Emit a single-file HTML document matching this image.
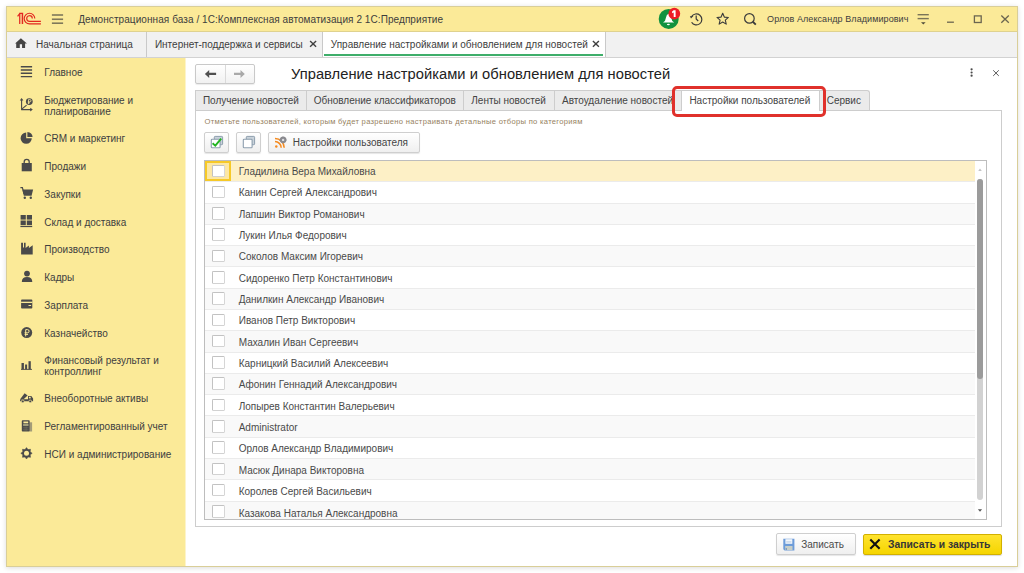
<!DOCTYPE html>
<html><head><meta charset="utf-8">
<style>
html,body{margin:0;padding:0;}
body{width:1024px;height:573px;overflow:hidden;background:#ffffff;position:relative;font-family:"Liberation Sans",sans-serif;font-size:10px;line-height:1;color:#404040;}
.a{position:absolute;box-sizing:border-box;}
.t{position:absolute;white-space:nowrap;}
svg{position:absolute;overflow:visible;}
</style></head>
<body>
<div class="a" style="left:6px;top:6px;width:1012px;height:561px;border:1px solid #d9ce98;background:#fff;box-shadow:0 1px 5px rgba(0,0,0,0.14);"></div>
<div class="a" style="left:7px;top:7px;width:1010px;height:25px;background:#fbea98;border-bottom:1px solid #dfd28f;"></div>
<div class="a" style="left:7px;top:32px;width:1010px;height:26px;background:#f1f1f1;border-bottom:1px solid #d2d2d2;"></div>
<div class="a" style="left:7px;top:58px;width:178px;height:508px;background:#fbea98;box-shadow:1px 0 0 #fdf4cb;"></div>
<div class="t" style="left:78.20px;top:14.68px;font-size:10px;line-height:10px;color:#3d3d3d;letter-spacing:0.075px;">Демонстрационная база / 1С:Комплексная автоматизация 2 1С:Предприятие</div>
<div class="t" style="left:767.10px;top:14.88px;font-size:9px;line-height:9px;color:#3d3d3d;letter-spacing:0.08px;">Орлов Александр Владимирович</div>
<div class="a" style="left:146px;top:32px;width:1px;height:25px;background:#c9c9c9;"></div>
<div class="a" style="left:322px;top:32px;width:284px;height:25px;background:#fff;border-left:1px solid #c9c9c9;border-right:1px solid #c9c9c9;"></div>
<div class="a" style="left:324.4px;top:54px;width:279px;height:2px;background:#3fae6a;"></div>
<div class="t" style="left:36.00px;top:40.33px;font-size:10px;line-height:10px;color:#3d3d3d;">Начальная страница</div>
<div class="t" style="left:154.90px;top:40.33px;font-size:10px;line-height:10px;color:#3d3d3d;">Интернет-поддержка и сервисы</div>
<div class="t" style="left:330.80px;top:40.33px;font-size:10px;line-height:10px;color:#3d3d3d;">Управление настройками и обновлением для новостей</div>
<div class="t" style="left:44.30px;top:68.03px;font-size:10px;line-height:10px;color:#404040;">Главное</div>
<div class="t" style="left:44.3px;top:94.93px;font-size:10px;line-height:11px;color:#404040;">Бюджетирование и<br>планирование</div>
<div class="t" style="left:44.30px;top:134.14px;font-size:10px;line-height:10px;color:#404040;">CRM и маркетинг</div>
<div class="t" style="left:44.30px;top:161.84px;font-size:10px;line-height:10px;color:#404040;">Продажи</div>
<div class="t" style="left:44.30px;top:189.74px;font-size:10px;line-height:10px;color:#404040;">Закупки</div>
<div class="t" style="left:44.30px;top:217.53px;font-size:10px;line-height:10px;color:#404040;">Склад и доставка</div>
<div class="t" style="left:44.30px;top:245.34px;font-size:10px;line-height:10px;color:#404040;">Производство</div>
<div class="t" style="left:44.30px;top:273.14px;font-size:10px;line-height:10px;color:#404040;">Кадры</div>
<div class="t" style="left:44.30px;top:300.94px;font-size:10px;line-height:10px;color:#404040;">Зарплата</div>
<div class="t" style="left:44.30px;top:328.64px;font-size:10px;line-height:10px;color:#404040;">Казначейство</div>
<div class="t" style="left:44.3px;top:355.24px;font-size:10px;line-height:11px;color:#404040;">Финансовый результат и<br>контроллинг</div>
<div class="t" style="left:44.30px;top:394.04px;font-size:10px;line-height:10px;color:#404040;">Внеоборотные активы</div>
<div class="t" style="left:44.30px;top:421.94px;font-size:10px;line-height:10px;color:#404040;">Регламентированный учет</div>
<div class="t" style="left:44.30px;top:449.94px;font-size:10px;line-height:10px;color:#404040;">НСИ и администрирование</div>
<div class="a" style="left:195px;top:64px;width:60px;height:20px;border:1px solid #c9c9c9;border-radius:2px;background:linear-gradient(#fff,#f1f1f1);box-shadow:0 1px 1px rgba(0,0,0,0.08);"></div>
<div class="a" style="left:225px;top:65px;width:1px;height:18px;background:#dadada;"></div>
<div class="t" style="left:291.00px;top:66.76px;font-size:14.7px;line-height:14.7px;color:#222;letter-spacing:0.035px;">Управление настройками и обновлением для новостей</div>
<div class="a" style="left:195.0px;top:90.4px;width:112.0px;height:20.5px;background:#ebebeb;border:1px solid #cdcdcd;border-bottom:none;overflow:hidden;"><div class="t" style="left:6.9px;top:4.83px;font-size:10px;line-height:10px;color:#444;">Получение новостей</div></div>
<div class="a" style="left:306.0px;top:90.4px;width:158.0px;height:20.5px;background:#ebebeb;border:1px solid #cdcdcd;border-bottom:none;overflow:hidden;"><div class="t" style="left:6.7px;top:4.83px;font-size:10px;line-height:10px;color:#444;">Обновление классификаторов</div></div>
<div class="a" style="left:463.0px;top:90.4px;width:92.3px;height:20.5px;background:#ebebeb;border:1px solid #cdcdcd;border-bottom:none;overflow:hidden;"><div class="t" style="left:7.3px;top:4.83px;font-size:10px;line-height:10px;color:#444;">Ленты новостей</div></div>
<div class="a" style="left:554.3px;top:90.4px;width:127.7px;height:20.5px;background:#ebebeb;border:1px solid #cdcdcd;border-bottom:none;overflow:hidden;"><div class="t" style="left:6.7px;top:4.83px;font-size:10px;line-height:10px;color:#444;">Автоудаление новостей</div></div>
<div class="a" style="left:818.6px;top:90.4px;width:51px;height:20.5px;background:#ebebeb;border:1px solid #cdcdcd;border-bottom:none;border-top-right-radius:3px;"></div>
<div class="t" style="left:826.70px;top:96.23px;font-size:10px;line-height:10px;color:#444;">Сервис</div>
<div class="a" style="left:195px;top:110.4px;width:807px;height:417px;border:1px solid #cdcdcd;background:#fff;"></div>
<div class="a" style="left:681px;top:90.4px;width:138.6px;height:21px;background:#fff;border:1px solid #cdcdcd;border-bottom:none;"></div>
<div class="t" style="left:689.40px;top:96.23px;font-size:10px;line-height:10px;color:#444;">Настройки пользователей</div>
<div class="a" style="left:672.2px;top:86.3px;width:153.7px;height:30.3px;border:3.4px solid #e0312b;border-radius:5px;"></div>
<div class="t" style="left:204.60px;top:117.57px;font-size:7.6px;line-height:7.6px;color:#967f61;letter-spacing:0.3px;">Отметьте пользователей, которым будет разрешено настраивать детальные отборы по категориям</div>
<div class="a" style="left:204px;top:132.3px;width:25px;height:20.4px;border:1px solid #cfcfcf;border-radius:2px;background:linear-gradient(#fff,#efefef);box-shadow:0 1px 1px rgba(0,0,0,0.1);"></div>
<div class="a" style="left:236px;top:132.3px;width:25px;height:20.4px;border:1px solid #cfcfcf;border-radius:2px;background:linear-gradient(#fff,#efefef);box-shadow:0 1px 1px rgba(0,0,0,0.1);"></div>
<div class="a" style="left:268px;top:132.3px;width:152px;height:20.4px;border:1px solid #cfcfcf;border-radius:2px;background:linear-gradient(#fff,#efefef);box-shadow:0 1px 1px rgba(0,0,0,0.1);"></div>
<div class="t" style="left:292.80px;top:137.73px;font-size:10px;line-height:10px;color:#444;">Настройки пользователя</div>
<div class="a" style="left:204px;top:160px;width:783px;height:360px;border:1px solid #bdbdbd;background:#fff;"></div>
<div class="a" style="left:205px;top:161px;width:781px;height:358px;overflow:hidden;">
<div class="a" style="left:0;top:0px;width:770px;height:20px;background:#fdf0c6;"></div>
<div class="a" style="left:0;top:0;width:26px;height:20px;background:#fce7a4;border:2px solid #f6c928;"></div>
<div class="a" style="left:7px;top:3.60px;width:12.6px;height:12.6px;background:#fff;border:1px solid #c2c2c2;border-right-color:#d6d6d6;border-bottom-color:#d2d2d2;border-radius:1.5px;"></div>
<div class="t" style="left:33.70px;top:6.00px;font-size:10px;line-height:10px;color:#4a4a4a;">Гладилина Вера Михайловна</div>
<div class="a" style="left:0;top:21px;width:770px;height:21px;background:#ffffff;"></div>
<div class="a" style="left:0;top:20px;width:770px;height:1px;background:#ebebeb;"></div>
<div class="a" style="left:7px;top:24.88px;width:12.6px;height:12.6px;background:#fff;border:1px solid #c2c2c2;border-right-color:#d6d6d6;border-bottom-color:#d2d2d2;border-radius:1.5px;"></div>
<div class="t" style="left:33.70px;top:27.35px;font-size:10px;line-height:10px;color:#4a4a4a;">Канин Сергей Александрович</div>
<div class="a" style="left:0;top:43px;width:770px;height:20px;background:#f9f9f9;"></div>
<div class="a" style="left:0;top:42px;width:770px;height:1px;background:#ebebeb;"></div>
<div class="a" style="left:7px;top:46.16px;width:12.6px;height:12.6px;background:#fff;border:1px solid #c2c2c2;border-right-color:#d6d6d6;border-bottom-color:#d2d2d2;border-radius:1.5px;"></div>
<div class="t" style="left:33.70px;top:48.69px;font-size:10px;line-height:10px;color:#4a4a4a;">Лапшин Виктор Романович</div>
<div class="a" style="left:0;top:64px;width:770px;height:20px;background:#ffffff;"></div>
<div class="a" style="left:0;top:63px;width:770px;height:1px;background:#ebebeb;"></div>
<div class="a" style="left:7px;top:67.44px;width:12.6px;height:12.6px;background:#fff;border:1px solid #c2c2c2;border-right-color:#d6d6d6;border-bottom-color:#d2d2d2;border-radius:1.5px;"></div>
<div class="t" style="left:33.70px;top:70.03px;font-size:10px;line-height:10px;color:#4a4a4a;">Лукин Илья Федорович</div>
<div class="a" style="left:0;top:85px;width:770px;height:20px;background:#f9f9f9;"></div>
<div class="a" style="left:0;top:84px;width:770px;height:1px;background:#ebebeb;"></div>
<div class="a" style="left:7px;top:88.72px;width:12.6px;height:12.6px;background:#fff;border:1px solid #c2c2c2;border-right-color:#d6d6d6;border-bottom-color:#d2d2d2;border-radius:1.5px;"></div>
<div class="t" style="left:33.70px;top:91.38px;font-size:10px;line-height:10px;color:#4a4a4a;">Соколов Максим Игоревич</div>
<div class="a" style="left:0;top:106px;width:770px;height:21px;background:#ffffff;"></div>
<div class="a" style="left:0;top:105px;width:770px;height:1px;background:#ebebeb;"></div>
<div class="a" style="left:7px;top:110.00px;width:12.6px;height:12.6px;background:#fff;border:1px solid #c2c2c2;border-right-color:#d6d6d6;border-bottom-color:#d2d2d2;border-radius:1.5px;"></div>
<div class="t" style="left:33.70px;top:112.72px;font-size:10px;line-height:10px;color:#4a4a4a;">Сидоренко Петр Константинович</div>
<div class="a" style="left:0;top:128px;width:770px;height:20px;background:#f9f9f9;"></div>
<div class="a" style="left:0;top:127px;width:770px;height:1px;background:#ebebeb;"></div>
<div class="a" style="left:7px;top:131.28px;width:12.6px;height:12.6px;background:#fff;border:1px solid #c2c2c2;border-right-color:#d6d6d6;border-bottom-color:#d2d2d2;border-radius:1.5px;"></div>
<div class="t" style="left:33.70px;top:134.07px;font-size:10px;line-height:10px;color:#4a4a4a;">Данилкин Александр Иванович</div>
<div class="a" style="left:0;top:149px;width:770px;height:20px;background:#ffffff;"></div>
<div class="a" style="left:0;top:148px;width:770px;height:1px;background:#ebebeb;"></div>
<div class="a" style="left:7px;top:152.56px;width:12.6px;height:12.6px;background:#fff;border:1px solid #c2c2c2;border-right-color:#d6d6d6;border-bottom-color:#d2d2d2;border-radius:1.5px;"></div>
<div class="t" style="left:33.70px;top:155.41px;font-size:10px;line-height:10px;color:#4a4a4a;">Иванов Петр Викторович</div>
<div class="a" style="left:0;top:170px;width:770px;height:21px;background:#f9f9f9;"></div>
<div class="a" style="left:0;top:169px;width:770px;height:1px;background:#ebebeb;"></div>
<div class="a" style="left:7px;top:173.84px;width:12.6px;height:12.6px;background:#fff;border:1px solid #c2c2c2;border-right-color:#d6d6d6;border-bottom-color:#d2d2d2;border-radius:1.5px;"></div>
<div class="t" style="left:33.70px;top:176.76px;font-size:10px;line-height:10px;color:#4a4a4a;">Махалин Иван Сергеевич</div>
<div class="a" style="left:0;top:192px;width:770px;height:20px;background:#ffffff;"></div>
<div class="a" style="left:0;top:191px;width:770px;height:1px;background:#ebebeb;"></div>
<div class="a" style="left:7px;top:195.12px;width:12.6px;height:12.6px;background:#fff;border:1px solid #c2c2c2;border-right-color:#d6d6d6;border-bottom-color:#d2d2d2;border-radius:1.5px;"></div>
<div class="t" style="left:33.70px;top:198.10px;font-size:10px;line-height:10px;color:#4a4a4a;">Карницкий Василий Алексеевич</div>
<div class="a" style="left:0;top:213px;width:770px;height:20px;background:#f9f9f9;"></div>
<div class="a" style="left:0;top:212px;width:770px;height:1px;background:#ebebeb;"></div>
<div class="a" style="left:7px;top:216.40px;width:12.6px;height:12.6px;background:#fff;border:1px solid #c2c2c2;border-right-color:#d6d6d6;border-bottom-color:#d2d2d2;border-radius:1.5px;"></div>
<div class="t" style="left:33.70px;top:219.45px;font-size:10px;line-height:10px;color:#4a4a4a;">Афонин Геннадий Александрович</div>
<div class="a" style="left:0;top:234px;width:770px;height:20px;background:#ffffff;"></div>
<div class="a" style="left:0;top:233px;width:770px;height:1px;background:#ebebeb;"></div>
<div class="a" style="left:7px;top:237.68px;width:12.6px;height:12.6px;background:#fff;border:1px solid #c2c2c2;border-right-color:#d6d6d6;border-bottom-color:#d2d2d2;border-radius:1.5px;"></div>
<div class="t" style="left:33.70px;top:240.79px;font-size:10px;line-height:10px;color:#4a4a4a;">Лопырев Константин Валерьевич</div>
<div class="a" style="left:0;top:255px;width:770px;height:21px;background:#f9f9f9;"></div>
<div class="a" style="left:0;top:254px;width:770px;height:1px;background:#ebebeb;"></div>
<div class="a" style="left:7px;top:258.96px;width:12.6px;height:12.6px;background:#fff;border:1px solid #c2c2c2;border-right-color:#d6d6d6;border-bottom-color:#d2d2d2;border-radius:1.5px;"></div>
<div class="t" style="left:33.70px;top:262.14px;font-size:10px;line-height:10px;color:#4a4a4a;">Administrator</div>
<div class="a" style="left:0;top:277px;width:770px;height:20px;background:#ffffff;"></div>
<div class="a" style="left:0;top:276px;width:770px;height:1px;background:#ebebeb;"></div>
<div class="a" style="left:7px;top:280.24px;width:12.6px;height:12.6px;background:#fff;border:1px solid #c2c2c2;border-right-color:#d6d6d6;border-bottom-color:#d2d2d2;border-radius:1.5px;"></div>
<div class="t" style="left:33.70px;top:283.49px;font-size:10px;line-height:10px;color:#4a4a4a;">Орлов Александр Владимирович</div>
<div class="a" style="left:0;top:298px;width:770px;height:20px;background:#f9f9f9;"></div>
<div class="a" style="left:0;top:297px;width:770px;height:1px;background:#ebebeb;"></div>
<div class="a" style="left:7px;top:301.52px;width:12.6px;height:12.6px;background:#fff;border:1px solid #c2c2c2;border-right-color:#d6d6d6;border-bottom-color:#d2d2d2;border-radius:1.5px;"></div>
<div class="t" style="left:33.70px;top:304.83px;font-size:10px;line-height:10px;color:#4a4a4a;">Масюк Динара Викторовна</div>
<div class="a" style="left:0;top:319px;width:770px;height:21px;background:#ffffff;"></div>
<div class="a" style="left:0;top:318px;width:770px;height:1px;background:#ebebeb;"></div>
<div class="a" style="left:7px;top:322.80px;width:12.6px;height:12.6px;background:#fff;border:1px solid #c2c2c2;border-right-color:#d6d6d6;border-bottom-color:#d2d2d2;border-radius:1.5px;"></div>
<div class="t" style="left:33.70px;top:326.17px;font-size:10px;line-height:10px;color:#4a4a4a;">Королев Сергей Васильевич</div>
<div class="a" style="left:0;top:341px;width:770px;height:20px;background:#f9f9f9;"></div>
<div class="a" style="left:0;top:340px;width:770px;height:1px;background:#ebebeb;"></div>
<div class="a" style="left:7px;top:344.08px;width:12.6px;height:12.6px;background:#fff;border:1px solid #c2c2c2;border-right-color:#d6d6d6;border-bottom-color:#d2d2d2;border-radius:1.5px;"></div>
<div class="t" style="left:33.70px;top:347.52px;font-size:10px;line-height:10px;color:#4a4a4a;">Казакова Наталья Александровна</div>
</div>
<div class="a" style="left:977px;top:179px;width:6px;height:321.4px;border-radius:3px;background:#d2d2d2;"></div>
<div class="a" style="left:977px;top:179px;width:6px;height:200.3px;border-radius:3px;background:#9b9b9b;"></div>
<div class="a" style="left:776px;top:533px;width:80px;height:21.6px;border:1px solid #cfcfcf;border-radius:2px;background:linear-gradient(#fff,#efefef);box-shadow:0 1px 1px rgba(0,0,0,0.1);"></div>
<div class="t" style="left:801.25px;top:539.83px;font-size:10px;line-height:10px;color:#4a4a4a;">Записать</div>
<div class="a" style="left:863.4px;top:533.5px;width:138.2px;height:21.2px;border:1px solid #d2b000;border-radius:2px;background:linear-gradient(#ffe32e,#f5d500);box-shadow:0 1px 1px rgba(0,0,0,0.15);"></div>
<div class="t" style="left:888.00px;top:539.56px;font-size:10.33px;line-height:10.33px;color:#363636;font-weight:bold;">Записать и закрыть</div>
<svg width="1024" height="573" style="left:0;top:0;" viewBox="0 0 1024 573"><g fill="none" stroke="#e2261f" stroke-width="1.15" stroke-linecap="butt"><path d="M19.7 24.1 V13.4 H22.6 V24.1"/><path d="M19.7 13.6 L17.6 16.4"/><path d="M34.8 18.6 A5.3 5.3 0 1 0 29.5 23.9 H40.9"/><path d="M32.3 18.4 A2.8 2.8 0 1 0 29.5 21.3 H40.9"/></g><path d="M21.15 14 V24.1" stroke="#f08a6a" stroke-width="1.0"/><g stroke="#7f785a" stroke-width="1.6"><path d="M51.9 15 H63.1"/><path d="M51.9 19.26 H63.1"/><path d="M51.9 23.2 H63.1"/></g><path fill="#454545" d="M20.9 38.3 L15.1 43.6 H16.2 V47.9 H19.8 V44.2 H22.05 V47.9 H25.1 V43.6 H26.9 Z"/><g stroke="#3f3f3f" stroke-width="1.35"><path d="M310.1 40.9 L316.1 46.8"/><path d="M316.1 40.9 L310.1 46.8"/></g><g stroke="#3f3f3f" stroke-width="1.35"><path d="M592.9 40.9 L598.9 46.8"/><path d="M598.9 40.9 L592.9 46.8"/></g><circle cx="668.7" cy="18.9" r="10" fill="#12923f"/><path fill="#fff" d="M663 22.6 Q665.6 21.2 666 17.5 Q666.5 14.2 668.6 13.8 Q670.8 14.2 671.2 17.5 Q671.6 21.2 674.2 22.6 Z"/><ellipse cx="668.4" cy="24.4" rx="1.5" ry="0.75" fill="#fff"/><circle cx="674.3" cy="13.7" r="5.9" fill="#ee1d25"/><path fill="#fff" d="M673.6 10.2 H675.6 V16.9 H673.7 V12.6 L672.1 13.3 V11.6 Z"/><g fill="none" stroke="#3b3b3b" stroke-width="1.2"><path d="M691.6 22.2 A5.5 5.5 0 1 0 691.6 16.6"/><path d="M696.2 15.4 V18.9 L698.2 21"/></g><path fill="#3b3b3b" d="M689.9 16.2 L693.4 15.9 L691 18.6 Z"/><polygon fill="none" stroke="#3b3b3b" stroke-width="1.1" stroke-linejoin="round" points="722.70,13.30 724.32,17.08 728.41,17.45 725.32,20.15 726.23,24.15 722.70,22.05 719.17,24.15 720.08,20.15 716.99,17.45 721.08,17.08"/><g fill="none" stroke="#3b3b3b"><circle cx="749.4" cy="18.4" r="4.8" stroke-width="1.2"/><path d="M752.8 21.8 L755.8 24.6" stroke-width="1.9"/></g><g stroke="#7a7458" stroke-width="1.4"><path d="M917.6 14.7 H928.8"/><path d="M917.6 18.6 H928.8"/></g><path fill="#4e4a3a" d="M921 22.2 H925.6 L923.3 24.6 Z"/><g fill="none" stroke="#6b6650" stroke-width="1.3"><path d="M947 22.2 H953.9"/><rect x="974.4" y="15.9" width="6.8" height="6.6"/><path d="M1001.3 15.5 L1008.8 22.8 M1008.8 15.5 L1001.3 22.8"/></g><g stroke="#4a4a4a" stroke-width="1.4"><path d="M20.8 66.7 H32.1 M20.8 70 H32.1 M20.8 73.3 H32.1 M20.8 76.6 H32.1"/></g><g fill="none" stroke="#4a4a4a" stroke-width="1.1"><path d="M21.6 110 V99.5 M21.2 109.6 H31.5 M21.8 109.2 L26.6 105.2"/></g><path fill="#4a4a4a" d="M21.6 98 L19.8 100.6 H23.4 Z M32.8 109.6 L30.2 107.8 V111.4 Z"/><circle cx="29.3" cy="101.6" r="3.4" fill="#4a4a4a"/><path d="M28.5 104 V99.6 H29.9 A1.1 1.1 0 0 1 29.9 101.8 H27.8 M27.8 102.9 H30" stroke="#fbea98" stroke-width="0.8" fill="none"/><path fill="#4a4a4a" d="M26.2 132.6 V138.2 H31.8 A5.6 5.6 0 1 1 26.2 132.6 Z"/><path fill="#4a4a4a" d="M27.4 131.9 A5.6 5.6 0 0 1 32.6 137 H27.4 Z"/><path fill="#4a4a4a" d="M21.7 163 H31.8 V171.3 H21.7 Z"/><path fill="none" stroke="#4a4a4a" stroke-width="1.3" d="M24.2 164 V161.8 A2.5 2.5 0 0 1 29.2 161.8 V164"/><path fill="none" stroke="#4a4a4a" stroke-width="1.2" d="M20.4 187.6 H22.4 L24 193.8"/><path fill="#4a4a4a" d="M22.4 189.6 H33.1 L31.6 195.8 H23.8 Z"/><circle cx="24.8" cy="197.8" r="1.2" fill="#4a4a4a"/><circle cx="30.8" cy="197.8" r="1.2" fill="#4a4a4a"/><g fill="#4a4a4a"><rect x="20.6" y="215" width="5.2" height="4.6"/><rect x="26.8" y="215" width="5.2" height="4.6"/><rect x="20.6" y="220.5" width="5.2" height="4.6"/><rect x="26.8" y="220.5" width="5.2" height="4.6"/><rect x="20.4" y="225.9" width="11.8" height="1.2"/></g><path fill="#4a4a4a" d="M21.1 254.4 V242.7 H23 V247.5 L24 247.5 V242.7 H25.6 V248 L28.9 245.5 V248 L32.7 245.2 V254.4 Z"/><circle cx="27" cy="273.6" r="2.9" fill="#4a4a4a"/><path fill="#4a4a4a" d="M21.8 281.9 Q21.8 277 27 277 Q32.3 277 32.3 281.9 Z"/><rect x="21.1" y="299.6" width="11.2" height="9" rx="0.8" fill="#4a4a4a"/><rect x="21.1" y="301.7" width="11.2" height="1.3" fill="#fbea98"/><rect x="28.5" y="305" width="2.6" height="1" fill="#fbea98"/><circle cx="26.7" cy="332.6" r="5.5" fill="#4a4a4a"/><path d="M25.7 336.4 V329.6 H27.5 A1.6 1.6 0 0 1 27.5 332.8 H24.6 M24.6 334.4 H28" stroke="#fbea98" stroke-width="1" fill="none"/><g fill="#4a4a4a"><rect x="21.5" y="363" width="2.4" height="6.4"/><rect x="25.1" y="364.5" width="2" height="4.9"/><rect x="28.5" y="361.2" width="2.3" height="8.2"/><rect x="21" y="368.9" width="11" height="0.9"/></g><path fill="#4a4a4a" d="M20.1 399.2 L24.6 393.2 L27.6 395.4 L23.6 399.2 Z"/><path fill="#4a4a4a" d="M20.1 399.3 H28 V396 H31.3 L33.1 398.6 V401.3 H20.1 Z"/><rect x="28.9" y="396.8" width="1.8" height="1.6" fill="#fbea98"/><circle cx="22.8" cy="401.4" r="1.4" fill="#4a4a4a" stroke="#fbea98" stroke-width="0.7"/><circle cx="30.2" cy="401.4" r="1.4" fill="#4a4a4a" stroke="#fbea98" stroke-width="0.7"/><rect x="29.5" y="422.3" width="2.6" height="9.2" fill="#a39c78"/><rect x="21.8" y="420.2" width="7.9" height="11.3" rx="0.8" fill="#4a4a4a"/><rect x="23.4" y="421.5" width="4.8" height="1.8" fill="#fbea98"/><rect x="23.1" y="424.3" width="5.4" height="1.4" fill="#c8c290"/><g fill="#77735e"><rect x="23" y="427.6" width="5.5" height="0.5"/><rect x="23" y="429.6" width="5.5" height="0.5"/><rect x="24.8" y="426.4" width="0.5" height="4.6"/><rect x="26.6" y="426.4" width="0.5" height="4.6"/></g><polygon fill="#4a4a4a" stroke="#4a4a4a" stroke-width="0.5" stroke-linejoin="round" points="26.50,447.60 28.03,449.60 30.53,449.27 30.20,451.77 32.20,453.30 30.20,454.83 30.53,457.33 28.03,457.00 26.50,459.00 24.97,457.00 22.47,457.33 22.80,454.83 20.80,453.30 22.80,451.77 22.47,449.27 24.97,449.60"/><circle cx="26.5" cy="453.3" r="2.5" fill="#fbea98"/><path fill="#505050" d="M204.9 73.9 L209.2 69.9 V72.8 H216.1 V74.9 H209.2 V77.9 Z"/><path fill="#a9a9a9" d="M244.8 73.9 L240.5 69.9 V72.8 H234 V74.9 H240.5 V77.9 Z"/><g fill="#4a4a4a"><circle cx="971.6" cy="69.3" r="1.1"/><circle cx="971.6" cy="72.5" r="1.1"/><circle cx="971.6" cy="75.7" r="1.1"/></g><g stroke="#5a5a5a" stroke-width="1.0"><path d="M993.2 70.3 L998.8 75.9 M998.8 70.3 L993.2 75.9"/></g><rect x="214.3" y="136.4" width="8.3" height="8.3" rx="0.8" fill="#c9d2da" stroke="#8d9eae" stroke-width="1"/><rect x="211.3" y="139.2" width="8.8" height="8.5" rx="0.8" fill="#fff" stroke="#8d9eae" stroke-width="1.1"/><path d="M212.6 143.2 L215.3 145.6 L221.2 138.6" fill="none" stroke="#22b422" stroke-width="1.9"/><rect x="246.3" y="136.4" width="8.3" height="8.3" rx="0.8" fill="#c9d2da" stroke="#8d9eae" stroke-width="1"/><rect x="243.3" y="139.2" width="8.8" height="8.5" rx="0.8" fill="#fff" stroke="#8d9eae" stroke-width="1.1"/><g fill="none" stroke="#f58a1f" stroke-width="1.5"><path d="M275 141.5 A6.3 6.3 0 0 1 281.2 147.8"/><path d="M275 138.6 A9.2 9.2 0 0 1 284.2 147.8"/></g><circle cx="276.3" cy="146.5" r="1.25" fill="#f58a1f"/><polygon fill="#8a8a8f" points="286.54,138.84 286.54,140.96 285.53,141.07 285.65,140.79 286.28,141.58 284.78,143.08 283.99,142.45 284.27,142.33 284.16,143.34 282.04,143.34 281.93,142.33 282.21,142.45 281.42,143.08 279.92,141.58 280.55,140.79 280.67,141.07 279.66,140.96 279.66,138.84 280.67,138.73 280.55,139.01 279.92,138.22 281.42,136.72 282.21,137.35 281.93,137.47 282.04,136.46 284.16,136.46 284.27,137.47 283.99,137.35 284.78,136.72 286.28,138.22 285.65,139.01 285.53,138.73"/><circle cx="283.1" cy="139.9" r="1.2" fill="#dcdce0"/><path fill="#c4c4c4" d="M978.2 171 L980 168.6 L981.8 171 Z"/><path fill="#555" d="M977.9 509.2 L980 511.8 L982.1 509.2 Z"/><path fill="#6d9cd9" d="M783.3 538.7 H794.4 V550.6 H784.6 L783.3 549.3 Z"/><rect x="785.4" y="539.2" width="6.9" height="4.6" fill="#f4f7fb"/><rect x="786.2" y="541.6" width="5.2" height="0.7" fill="#9bb6d8"/><rect x="785.2" y="546" width="7.3" height="4.1" fill="#c9cfc8"/><circle cx="786.3" cy="549" r="0.7" fill="#4a78b8"/><path d="M870.3 539.6 L879.6 548.8 M879.6 539.6 L870.3 548.8" stroke="#111" stroke-width="2.1"/></svg>
</body></html>
